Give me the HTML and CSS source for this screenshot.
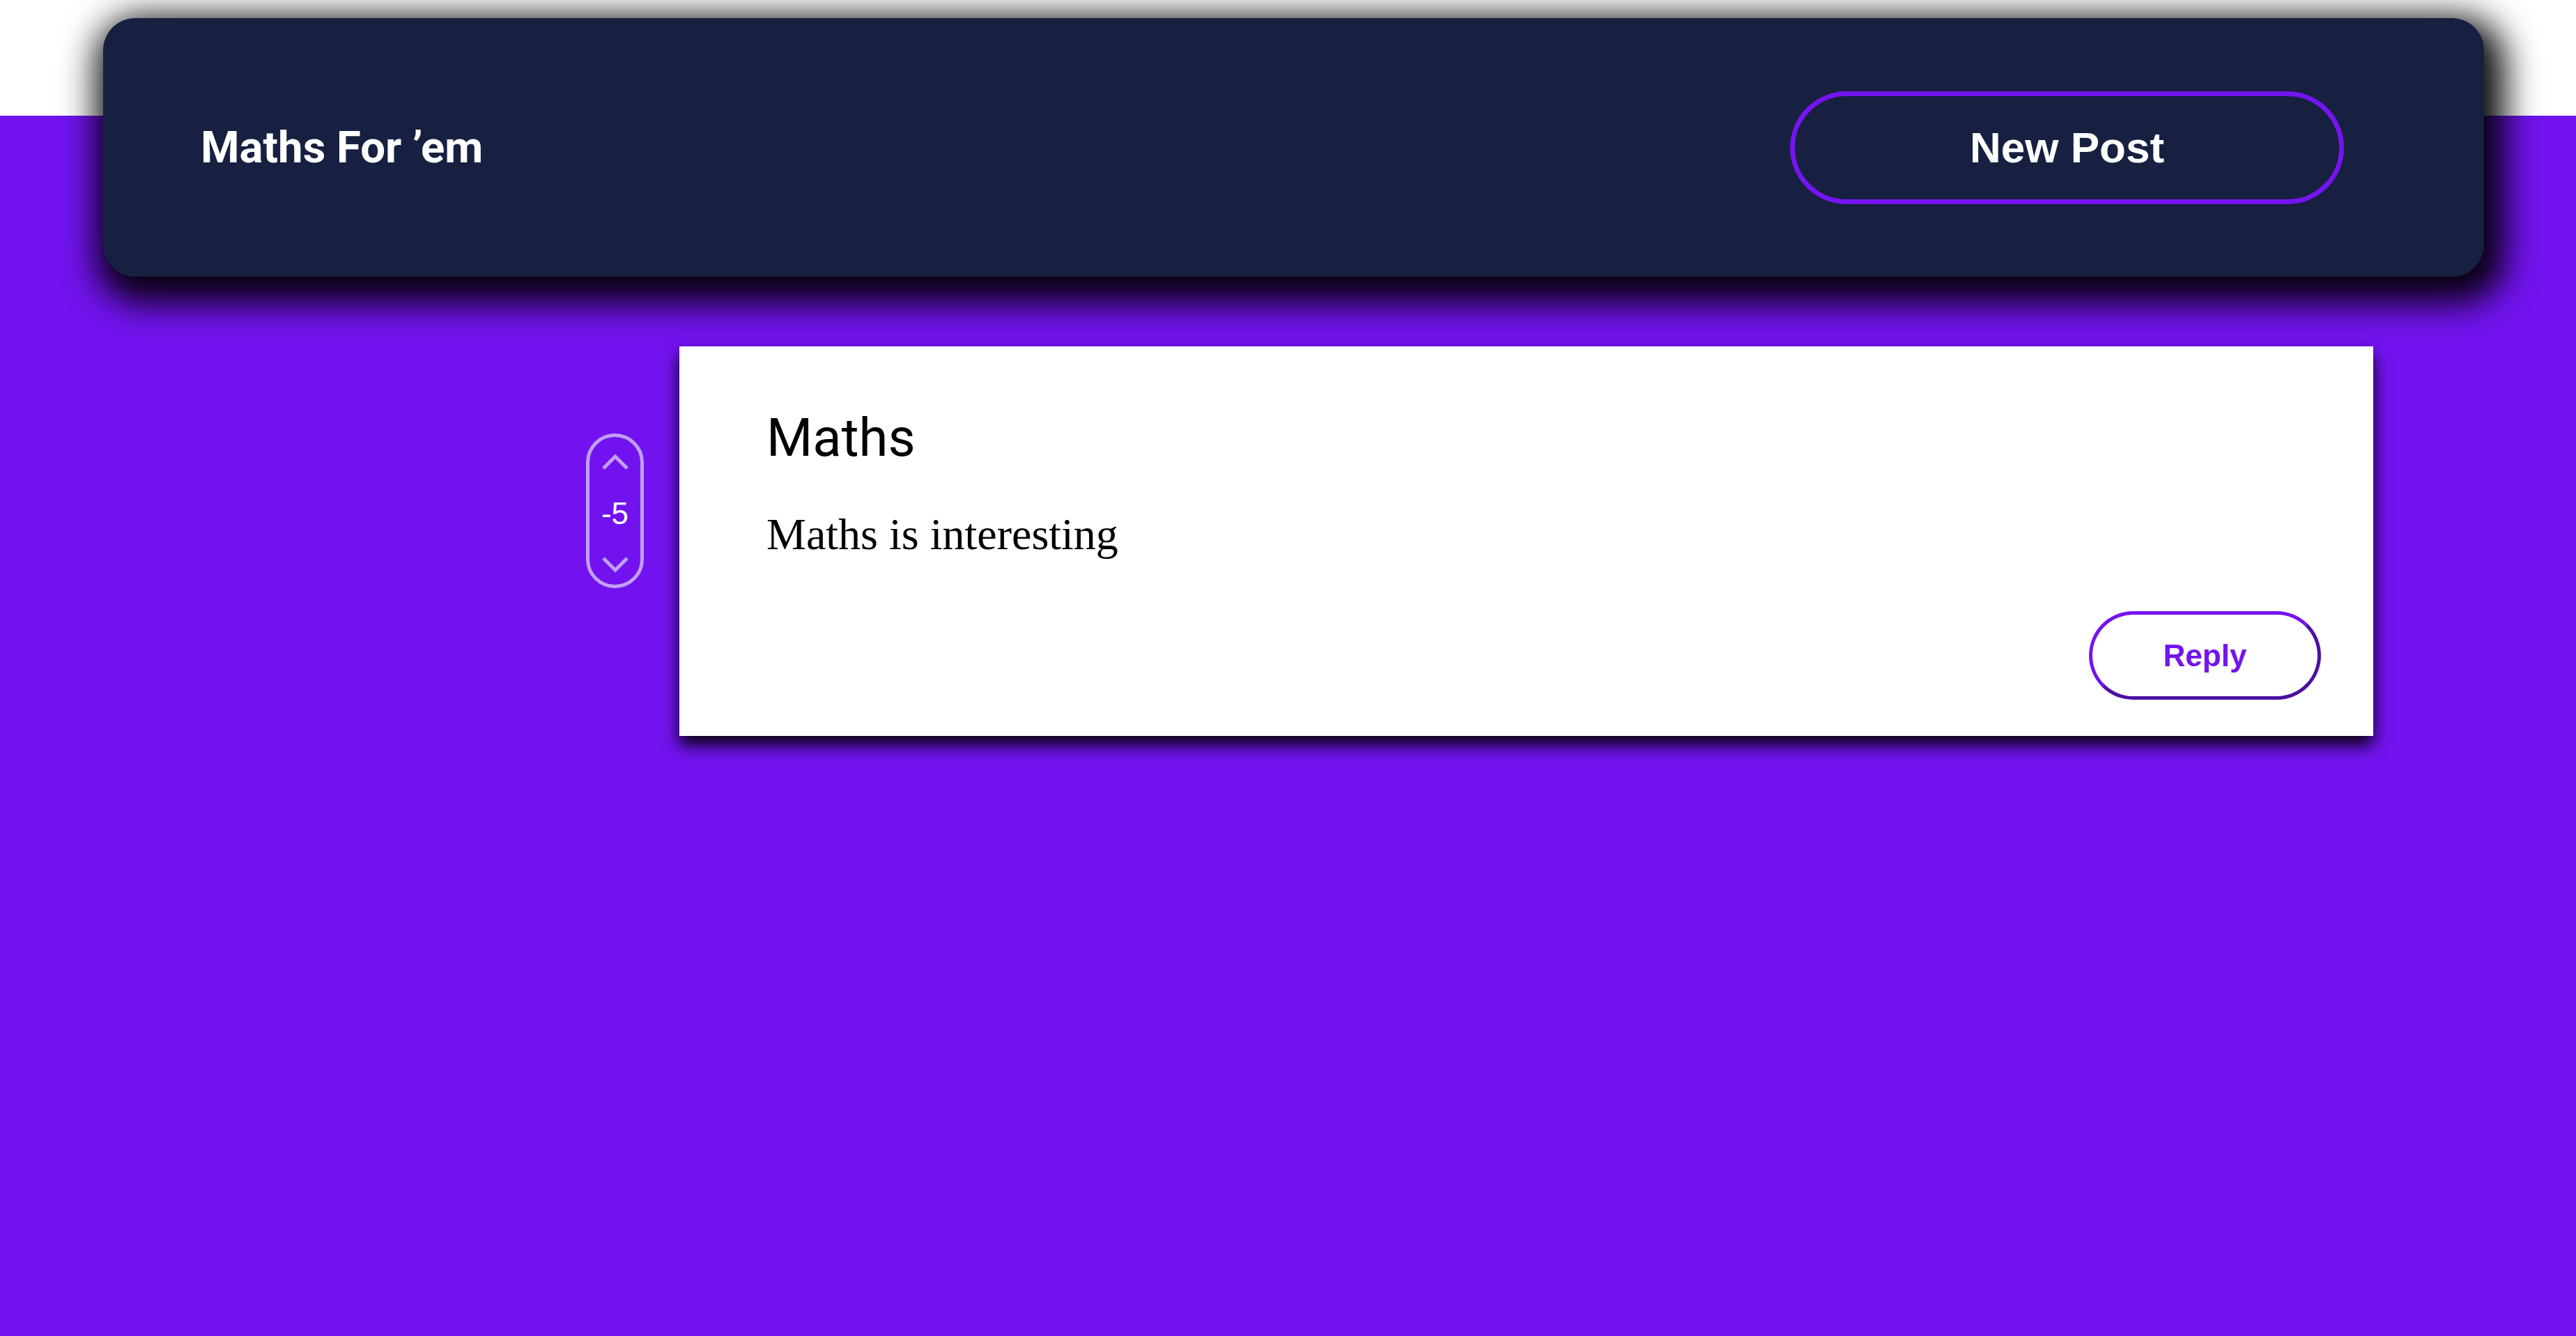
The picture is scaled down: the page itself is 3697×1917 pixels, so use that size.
FILE: index.html
```html
<!DOCTYPE html>
<html lang="en">
<head>
<meta charset="utf-8">
<title>Maths For ’em</title>
<link rel="stylesheet" href="styles.css">
</head>
<body>
<header class="topbar">
  <h1 class="brand">Maths For ’em</h1>
  <button class="new-post">New Post</button>
</header>
<main class="feed">
  <article class="post">
    <div class="vote">
      <svg class="chev" viewBox="0 0 40 24" width="40" height="24"><polyline points="3,21 20,4 37,21"/></svg>
      <span class="score">-5</span>
      <svg class="chev" viewBox="0 0 40 24" width="40" height="24"><polyline points="3,3 20,20 37,3"/></svg>
    </div>
    <div class="card">
      <h2 class="card-title">Maths</h2>
      <p class="card-body">Maths is interesting</p>
      <div class="card-actions">
        <button class="reply">Reply</button>
      </div>
    </div>
  </article>
</main>
</body>
</html>
```
FILE: styles.css
```css
html, body {
  margin: 0;
  padding: 0;
}
body {
  min-height: 100vh;
  background: linear-gradient(to bottom, #ffffff 0, #ffffff 166px, #7213ef 166px, #7213ef 100%);
  font-family: "Liberation Serif", serif;
  overflow: hidden;
}
.topbar {
  margin: 26px 132px 0 148px;
  height: 371px;
  box-sizing: border-box;
  background: #172040;
  border-radius: 46px;
  display: flex;
  align-items: center;
  justify-content: space-between;
  padding: 0 201px 0 140px;
  box-shadow: 10px 18px 50px 20px rgba(0, 0, 0, 0.95);
  position: relative;
  z-index: 1;
}
.brand {
  margin: 0;
  font-family: Roboto, "Liberation Sans", sans-serif;
  font-weight: 700;
  font-size: 63.5px;
  color: #ffffff;
  line-height: 1;
}
.new-post {
  width: 795px;
  height: 162px;
  box-sizing: border-box;
  border: 7px solid #7414ee;
  border-radius: 81px;
  background: transparent;
  color: #ffffff;
  font-family: "Liberation Sans", Arial, sans-serif;
  font-weight: 700;
  font-size: 62px;
  padding: 0;
  cursor: pointer;
}
.feed {
  padding: 100px 0 0 841px;
}
.post {
  display: flex;
  align-items: flex-start;
  gap: 51px;
}
.vote {
  margin-top: 125px;
  width: 83px;
  height: 222px;
  box-sizing: border-box;
  border: 5px solid #c29ff8;
  border-radius: 42px;
  display: flex;
  flex-direction: column;
  align-items: center;
  justify-content: space-between;
  padding: 24px 0 17px;
}
.chev {
  display: block;
  width: 40px;
  height: 24px;
}
.chev polyline {
  fill: none;
  stroke: #c29ff8;
  stroke-width: 5;
  stroke-linecap: butt;
  stroke-linejoin: miter;
}
.score {
  font-family: "Liberation Sans", Arial, sans-serif;
  font-size: 44px;
  color: #ffffff;
  line-height: 1;
}
.card {
  width: 2431px;
  box-sizing: border-box;
  background: #ffffff;
  padding: 86px 75px 52px 125px;
  box-shadow: 0 13px 22px rgba(0, 0, 0, 0.95);
}
.card-title {
  margin: 0;
  font-family: Roboto, "Liberation Sans", sans-serif;
  font-weight: 400;
  font-size: 76px;
  line-height: normal;
  color: #000000;
}
.card-body {
  margin: 57px 0 0;
  font-family: "Liberation Serif", "Times New Roman", serif;
  font-size: 64px;
  line-height: normal;
  color: #000000;
}
.card-actions {
  display: flex;
  justify-content: flex-end;
  margin-top: 73px;
}
.reply {
  width: 333px;
  height: 127px;
  box-sizing: border-box;
  border: 5px solid;
  border-color: #7514ee #4d0fa3 #4d0fa3 #7514ee;
  border-radius: 64px;
  background: #ffffff;
  color: #7314ef;
  font-family: "Liberation Sans", Arial, sans-serif;
  font-weight: 700;
  font-size: 44px;
  padding: 0;
  cursor: pointer;
}
```
